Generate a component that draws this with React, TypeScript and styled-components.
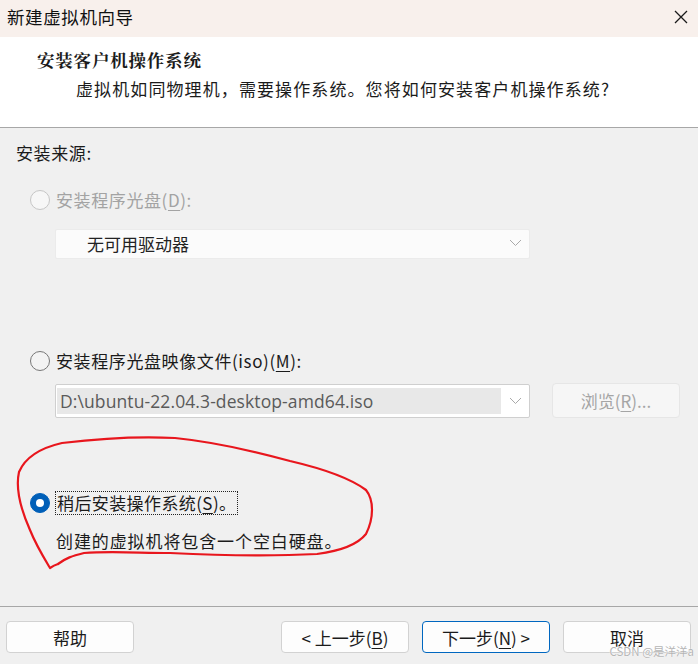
import React from "react";
import styled, { createGlobalStyle } from "styled-components";

const Global = createGlobalStyle`
  html, body { margin: 0; padding: 0; }
  body {
    width: 698px; height: 664px; overflow: hidden;
    font-family: "Noto Sans CJK SC", "Noto Sans", sans-serif;
    background: #f0f0f0;
  }
`;

const Window = styled.div`
  position: relative;
  width: 698px;
  height: 664px;
  display: flex;
  flex-direction: column;
  background: #f0f0f0;
  color: #1b1b1b;
  font-size: 17px;
`;

const TitleBar = styled.div`
  height: 37px;
  flex: none;
  background: #f8f0ec;
  display: flex;
  align-items: center;
  justify-content: space-between;
  padding: 0 9px 4px 7px;
  box-sizing: border-box;
`;

const TitleText = styled.div`
  font-size: 17.5px;
  letter-spacing: 0.6px;
  color: #111;
`;

const Header = styled.div`
  height: 91px;
  flex: none;
  background: #ffffff;
  border-bottom: 1px solid #a7a7a7;
  box-sizing: border-box;
  padding: 12px 0 0 37px;
`;

const HeaderTitle = styled.div`
  font-size: 17.5px;
  font-weight: 700;
  line-height: 22px;
  letter-spacing: 0.8px;
  font-family: "Noto Serif CJK SC", "Noto Sans CJK SC", serif;
`;

const HeaderSub = styled.div`
  margin: 7px 0 0 39px;
  font-size: 17px;
  line-height: 22px;
  letter-spacing: 1.1px;
`;

const Body = styled.div`
  flex: 1;
  padding: 14px 0 0 16px;
  box-sizing: border-box;
  display: flex;
  flex-direction: column;
`;

const Label = styled.div<{ $disabled?: boolean }>`
  line-height: 22px;
  font-size: 17px;
  letter-spacing: 0.6px;
  color: ${(p) => (p.$disabled ? "#a3a3a3" : "#1b1b1b")};
`;

const RadioRow = styled.div<{ $mt: number }>`
  margin-top: ${(p) => p.$mt}px;
  margin-left: 14px;
  display: flex;
  align-items: center;
  gap: 6px;
  height: 22px;
`;

const RadioCircle = styled.span<{ $state: "disabled" | "off" | "on" }>`
  width: 20px;
  height: 20px;
  box-sizing: border-box;
  border-radius: 50%;
  flex: none;
  position: relative;
  background: ${(p) => (p.$state === "on" ? "#005fb8" : p.$state === "disabled" ? "#f7f7f7" : "#f3f3f3")};
  border: 1px solid ${(p) => (p.$state === "on" ? "#005fb8" : p.$state === "disabled" ? "#c6c6c6" : "#777")};
  &::after {
    content: "";
    display: ${(p) => (p.$state === "on" ? "block" : "none")};
    position: absolute;
    left: 5px;
    top: 5px;
    width: 8px;
    height: 8px;
    border-radius: 50%;
    background: #fff;
  }
`;

const Focus = styled.span`
  outline: 1px dotted #222;
  outline-offset: 0px;
  padding: 0 1px;
  line-height: 22px;
  letter-spacing: 0.4px;
`;

const Under = styled.span`
  text-decoration: underline;
  text-underline-offset: 3px;
`;

const Indent = styled.div<{ $mt: number }>`
  margin-top: ${(p) => p.$mt}px;
  margin-left: 39px;
  display: flex;
  align-items: center;
  gap: 22px;
`;

const EmptyCombo = styled.div`
  width: 475px;
  height: 30px;
  box-sizing: border-box;
  background: #fbfbfb;
  border: 1px solid #ebebeb;
  border-radius: 2px;
  display: flex;
  align-items: center;
  justify-content: space-between;
  padding: 0 7px 2px 31px;
  font-size: 17px;
  color: #222;
`;

const IsoCombo = styled.div`
  width: 475px;
  height: 34px;
  box-sizing: border-box;
  background: #ffffff;
  border: 1px solid #cfcfcf;
  border-radius: 2px;
  display: flex;
  align-items: stretch;
  padding: 3px 0 3px 1px;
`;

const IsoField = styled.div`
  flex: 1;
  background: #e8e8e8;
  color: #5a5a5a;
  font-family: "Open Sans", "Noto Sans", sans-serif;
  font-size: 17.5px;
  letter-spacing: 0.1px;
  display: flex;
  align-items: center;
  padding-left: 3px;
`;

const ArrowBox = styled.div`
  width: 28px;
  display: flex;
  align-items: center;
  justify-content: center;
`;

const BrowseButton = styled.div`
  width: 128px;
  height: 35px;
  box-sizing: border-box;
  background: #f6f6f6;
  border: 1px solid #e6e6e6;
  border-radius: 4px;
  color: #a5a5a5;
  display: flex;
  align-items: center;
  justify-content: center;
  font-size: 17px;
`;

const Desc = styled.div`
  margin: 16px 0 0 40px;
  line-height: 22px;
  font-size: 17px;
  letter-spacing: 0.9px;
`;

const Footer = styled.div`
  height: 58px;
  flex: none;
  border-top: 1px solid #a7a7a7;
  box-sizing: border-box;
  display: flex;
  align-items: flex-start;
  padding: 14px 7px 0 6px;
  gap: 13px;
`;

const Button = styled.div<{ $primary?: boolean; $push?: boolean }>`
  width: 128px;
  height: 32px;
  box-sizing: border-box;
  background: #fdfdfd;
  border: 1px solid ${(p) => (p.$primary ? "#0067c0" : "#d2d2d2")};
  border-radius: 4px;
  display: flex;
  align-items: center;
  justify-content: center;
  font-size: 17px;
  color: #1b1b1b;
  margin-left: ${(p) => (p.$push ? "auto" : "0")};
`;

const Scribble = styled.svg`
  position: absolute;
  left: 0;
  top: 0;
  pointer-events: none;
`;

const Watermark = styled.div`
  position: absolute;
  right: 4px;
  bottom: 5px;
  font-family: "Noto Sans CJK SC", sans-serif;
  font-size: 11.5px;
  color: #b5b5b5;
  text-shadow: 0 0 1px #fff, 0 0 1px #fff;
`;

const Chevron = () => (
  <svg width="13" height="8" viewBox="0 0 13 8">
    <path d="M1 1 L6.5 6.5 L12 1" fill="none" stroke="#a9a9a9" strokeWidth="1" />
  </svg>
);

const CloseIcon = () => (
  <svg width="16" height="16" viewBox="0 0 16 16">
    <path d="M2 2 L14 14 M14 2 L2 14" stroke="#1a1a1a" strokeWidth="1.3" fill="none" />
  </svg>
);

export default function App() {
  return (
    <>
      <Global />
      <Window>
        <TitleBar>
          <TitleText>新建虚拟机向导</TitleText>
          <CloseIcon />
        </TitleBar>
        <Header>
          <HeaderTitle>安装客户机操作系统</HeaderTitle>
          <HeaderSub>虚拟机如同物理机，需要操作系统。您将如何安装客户机操作系统?</HeaderSub>
        </Header>
        <Body>
          <Label>安装来源:</Label>
          <RadioRow $mt={25}>
            <RadioCircle $state="disabled" />
            <Label $disabled>
              安装程序光盘(<Under>D</Under>):
            </Label>
          </RadioRow>
          <Indent $mt={18}>
            <EmptyCombo>
              <span>无可用驱动器</span>
              <Chevron />
            </EmptyCombo>
          </Indent>
          <RadioRow $mt={91}>
            <RadioCircle $state="off" />
            <Label>
              安装程序光盘映像文件(iso)(<Under>M</Under>):
            </Label>
          </RadioRow>
          <Indent $mt={11}>
            <IsoCombo>
              <IsoField>D:\ubuntu-22.04.3-desktop-amd64.iso</IsoField>
              <ArrowBox>
                <Chevron />
              </ArrowBox>
            </IsoCombo>
            <BrowseButton>
              浏览(<Under>R</Under>)...
            </BrowseButton>
          </Indent>
          <RadioRow $mt={74}>
            <RadioCircle $state="on" />
            <Focus>
              稍后安装操作系统(<Under>S</Under>)。
            </Focus>
          </RadioRow>
          <Desc>创建的虚拟机将包含一个空白硬盘。</Desc>
        </Body>
        <Footer>
          <Button>帮助</Button>
          <Button $push>
            &lt; 上一步(<Under>B</Under>)
          </Button>
          <Button $primary>
            下一步(<Under>N</Under>) &gt;
          </Button>
          <Button>取消</Button>
        </Footer>
        <Scribble width="698" height="664" viewBox="0 0 698 664">
          <path
            d="M58 564 C66 558 72 556 84 553 C110 551 140 553 170 553 C210 555 260 557 317 554 C340 551 358 544 366 534 C374 518 374 500 366 490 C350 478 320 468 290 461 C250 450 215 442 175 438 C135 436 95 439 62 443 C40 448 25 458 19 472 C15 490 22 512 30 530 C36 545 44 558 50 568 C53 566 55 565 58 564"
            fill="none"
            stroke="#e8161d"
            strokeWidth="2.2"
            strokeLinecap="round"
            strokeLinejoin="round"
          />
        </Scribble>
        <Watermark>CSDN @是洋洋a</Watermark>
      </Window>
    </>
  );
}
